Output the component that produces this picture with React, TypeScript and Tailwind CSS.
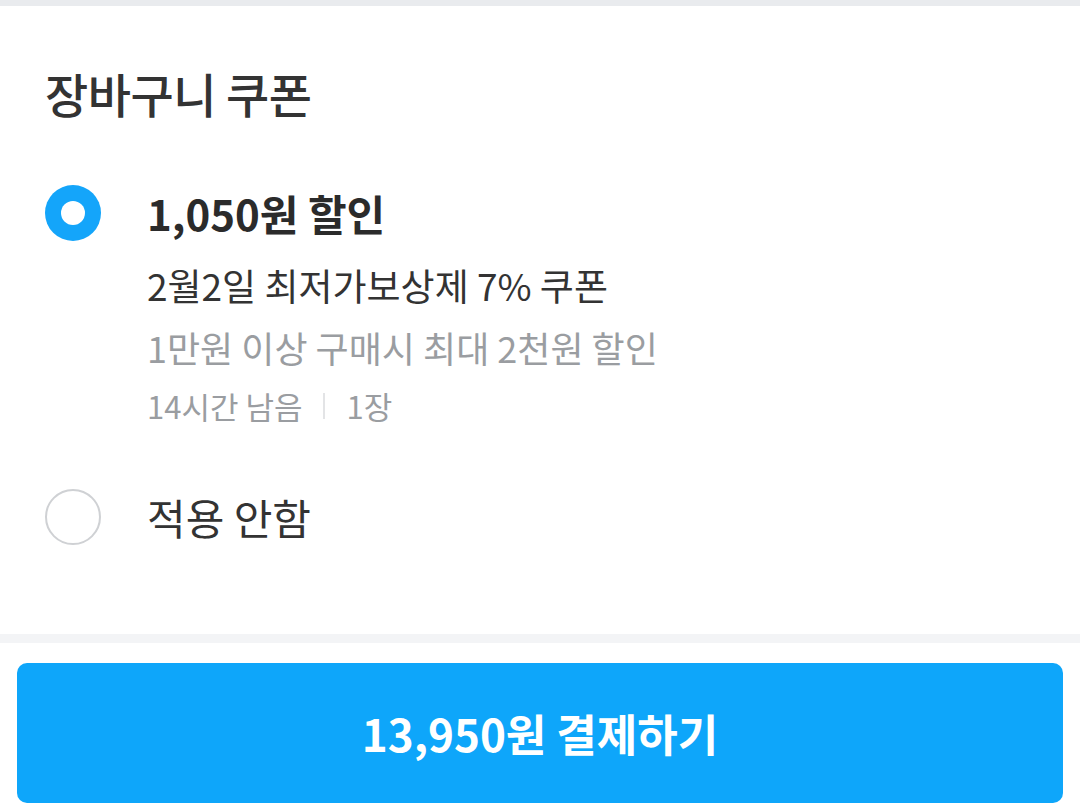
import React, { useState } from 'react';

const font = { fontFamily: '"Noto Sans CJK KR", "Noto Sans", sans-serif' };

const App: React.FC = () => {
  const [applied, setApplied] = useState(true);

  return (
    <div className="w-[1080px] h-[804px] overflow-hidden bg-white flex flex-col" style={font}>
      {/* top divider */}
      <div className="h-[6px] bg-[#e9ebee] shrink-0" />

      {/* coupon section */}
      <div className="px-[45px] pt-[57px] h-[628px] shrink-0">
        <h2 className="text-[47px] leading-[60px] font-medium text-[#333333] tracking-[-0.5px]">장바구니 쿠폰</h2>

        <div className="mt-[54px] flex items-start gap-[46px]">
          <button
            onClick={() => setApplied(true)}
            className="mt-[8px] w-[56px] h-[56px] rounded-full shrink-0 flex items-center justify-center bg-[#14a5fa]"
          >
            {applied ? (
              <span className="w-[24px] h-[24px] rounded-full bg-white" />
            ) : (
              <span className="w-[52px] h-[52px] rounded-full bg-white" />
            )}
          </button>
          <div className="flex flex-col">
            <p className="text-[42px] leading-[72px] font-bold text-[#2b2b2b]">1,050원 할인</p>
            <p className="mt-[11px] text-[37px] leading-[50px] text-[#333333]">2월2일 최저가보상제 7% 쿠폰</p>
            <p className="mt-[12px] text-[36px] leading-[50px] text-[#9a9da1]">1만원 이상 구매시 최대 2천원 할인</p>
            <div className="mt-[12px] flex items-center text-[31px] leading-[44px] text-[#9a9da1]">
              <span>14시간 남음</span>
              <span className="mx-[21px] w-[2px] h-[26px] bg-[#e3e4e6]" />
              <span>1장</span>
            </div>
          </div>
        </div>

        <div className="mt-[61px] flex items-center gap-[46px]">
          <button
            onClick={() => setApplied(false)}
            className="w-[56px] h-[56px] rounded-full shrink-0 border-2 border-[#cfd1d4] bg-white"
          />
          <span className="text-[42px] leading-[56px] text-[#333333]">적용 안함</span>
        </div>
      </div>

      {/* bottom divider */}
      <div className="h-[9px] bg-[#f3f4f6] shrink-0" />

      {/* pay button */}
      <div className="px-[17px] pt-[20px]">
        <button className="w-full h-[140px] rounded-[10px] bg-[#0ea6fa] text-white text-[44px] font-bold flex items-center justify-center">
          13,950원 결제하기
        </button>
      </div>
    </div>
  );
};

export default App;
